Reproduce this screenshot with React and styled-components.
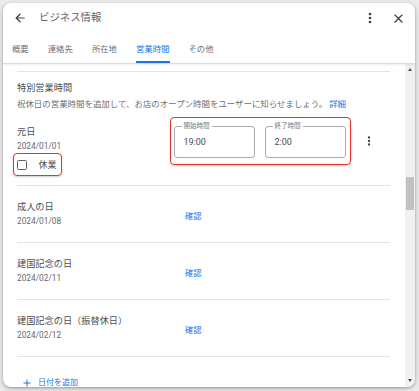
import React from "react";
import styled, { createGlobalStyle } from "styled-components";

const Global = createGlobalStyle`
  html, body { margin: 0; padding: 0; background: #ececec; }
  body {
    font-family: Roboto, "Noto Sans CJK JP", sans-serif;
    width: 419px; height: 391px; overflow: hidden;
    -webkit-font-smoothing: antialiased;
  }
`;

const Page = styled.div`
  box-sizing: border-box;
  height: 391px;
  padding: 3px 4px 4px 3px;
`;

const Dialog = styled.div`
  width: 412px;
  height: 384px;
  background: #fff;
  border-radius: 8px;
  box-shadow: 0 1px 3px rgba(0,0,0,0.3), 0 2px 8px rgba(0,0,0,0.12);
  display: flex;
  flex-direction: column;
  overflow: hidden;
`;

const Header = styled.div`
  flex-shrink: 0;
  height: 30px;
  display: flex;
  align-items: center;
  padding: 0 9.5px;
`;

const Title = styled.div`
  flex: 1;
  margin-left: 12.5px;
  font-size: 10.4px;
  line-height: 14px;
  color: #5f6368;
`;

const IconBox = styled.svg`
  display: block;
  flex-shrink: 0;
  width: ${(p) => p.$size}px;
  height: ${(p) => p.$size}px;
  margin-left: ${(p) => p.$ml || 0}px;
  margin-top: ${(p) => p.$mt || 0}px;
  fill: ${(p) => p.$color || "#3c4043"};
`;

const Tabs = styled.div`
  flex-shrink: 0;
  height: 30px;
  display: flex;
  gap: 19px;
  padding-left: 9px;
  border-bottom: 1px solid #dcdcdc;
  box-shadow: 0 1px 2px rgba(0,0,0,0.08);
  position: relative;
  z-index: 1;
`;

const Tab = styled.div`
  box-sizing: border-box;
  height: 30px;
  padding-top: 10px;
  font-size: 8.4px;
  line-height: 12px;
  color: ${(p) => (p.$active ? "#1a73e8" : "#6b6f74")};
  border-bottom: 2px solid ${(p) => (p.$active ? "#1a73e8" : "transparent")};
`;

const Body = styled.div`
  flex: 1;
  min-height: 0;
  display: flex;
`;

const Content = styled.div`
  flex: 1;
  min-width: 0;
  overflow: hidden;
  padding: 7px 15px 0 14px;
`;

const Divider = styled.div`
  height: 1px;
  background: #e3e3e3;
`;

const SectionTitle = styled.div`
  margin-top: 9px;
  font-size: 9.2px;
  line-height: 14px;
  color: #4a4e52;
`;

const Description = styled.div`
  margin-top: 2px;
  font-size: 8.45px;
  line-height: 14px;
  color: #6b6f74;
  white-space: nowrap;
  display: flex;
`;

const Link = styled.a`
  margin-left: 2px;
  color: #1a73e8;
  text-decoration: none;
`;

const EditRow = styled.div`
  box-sizing: border-box;
  height: 74px;
  display: flex;
  align-items: flex-start;
`;

const LeftCol = styled.div`
  flex-shrink: 0;
  width: ${(p) => p.$w}px;
  margin-top: ${(p) => p.$mt || 0}px;
`;

const Name = styled.div`
  font-size: 9.2px;
  line-height: 14px;
  color: #4a4e52;
  white-space: nowrap;
`;

const DateText = styled.div`
  margin-top: 1px;
  font-size: 8.3px;
  line-height: 12px;
  color: #65696e;
`;

const Highlight = styled.div`
  box-sizing: border-box;
  border: 1.5px solid #e8302c;
  border-radius: 4px;
  box-shadow: 0 1px 2px rgba(0,0,0,0.2);
`;

const CheckHighlight = styled(Highlight)`
  margin-top: 1px;
  margin-left: -4px;
  width: 49px;
  height: 23px;
  display: flex;
  align-items: center;
  padding-left: 2.5px;
`;

const CheckBox = styled.div`
  box-sizing: border-box;
  width: 10px;
  height: 10px;
  border: 1.5px solid #5f6368;
  border-radius: 1.5px;
`;

const CheckLabel = styled.span`
  margin-left: 12px;
  font-size: 9px;
  line-height: 12px;
  color: #4a4e52;
`;

const FieldsHighlight = styled(Highlight)`
  margin-top: 6px;
  width: 181px;
  height: 48px;
  display: flex;
  gap: 10px;
  padding: 7.5px 3.5px 0 2.5px;
`;

const Field = styled.div`
  position: relative;
  box-sizing: border-box;
  width: 81px;
  height: 32px;
  border: 1px solid #a9acb0;
  border-radius: 3px;
  padding-left: 9px;
  font-size: 9px;
  line-height: 30px;
  color: #4a4e52;
`;

const FieldLabel = styled.span`
  position: absolute;
  top: -5px;
  left: 7px;
  padding: 0 2px;
  background: #fff;
  font-size: 6.5px;
  line-height: 8px;
  color: #75797e;
`;

const HolidayRow = styled.div`
  box-sizing: border-box;
  height: 57px;
  border-top: 1px solid #e3e3e3;
  padding-top: 14px;
  display: flex;
  align-items: flex-start;
`;

const Confirm = styled.div`
  margin-top: 10px;
  font-size: 8.2px;
  line-height: 12px;
  color: #1a73e8;
`;

const AddRow = styled.div`
  border-top: 1px solid #e3e3e3;
  padding-top: 20px;
  padding-left: 3.5px;
  display: flex;
  align-items: center;
  gap: 5.5px;
  color: #1a73e8;
  font-size: 8px;
  line-height: 12px;
`;

const Scrollbar = styled.div`
  flex-shrink: 0;
  width: 10px;
  background: #f1f1f1;
  display: flex;
  flex-direction: column;
  align-items: center;
`;

const Arrow = styled.div`
  width: 0;
  height: 0;
  margin: ${(p) => (p.$down ? "0 0 5px" : "4px 0 0")};
  border-left: 2.5px solid transparent;
  border-right: 2.5px solid transparent;
  ${(p) => (p.$down ? "border-top: 3px solid #505050;" : "border-bottom: 3px solid #505050;")}
`;

const Track = styled.div`
  flex: 1;
  align-self: stretch;
  display: flex;
  justify-content: center;
`;

const Thumb = styled.div`
  margin-top: 106px;
  width: 8px;
  height: 33px;
  background: #c1c1c1;
`;

const ArrowBack = () => (
  <IconBox $size={14} viewBox="0 0 24 24" $color="#3c4043">
    <path d="M20 11H7.83l5.59-5.59L12 4l-8 8 8 8 1.41-1.41L7.83 13H20v-2z" />
  </IconBox>
);

const MoreVert = ({ size, ml, mt }) => (
  <IconBox $size={size} $ml={ml} $mt={mt} viewBox="0 0 24 24" $color="#3c4043">
    <circle cx="12" cy="6" r="2" />
    <circle cx="12" cy="12" r="2" />
    <circle cx="12" cy="18" r="2" />
  </IconBox>
);

const CloseIcon = () => (
  <IconBox $size={15} $ml={12.5} viewBox="0 0 24 24" $color="#3c4043">
    <path d="M19 6.41L17.59 5 12 10.59 6.41 5 5 6.41 10.59 12 5 17.59 6.41 19 12 13.41 17.59 19 19 17.59 13.41 12z" />
  </IconBox>
);

const AddIcon = () => (
  <IconBox $size={12} viewBox="0 0 24 24" $color="#1a73e8">
    <path d="M19 13h-6v6h-2v-6H5v-2h6V5h2v6h6v2z" />
  </IconBox>
);

const tabs = ["概要", "連絡先", "所在地", "営業時間", "その他"];

const holidays = [
  { name: "成人の日", date: "2024/01/08" },
  { name: "建国記念の日", date: "2024/02/11" },
  { name: "建国記念の日（振替休日）", date: "2024/02/12" },
];

export default function App() {
  return (
    <>
      <Global />
      <Page>
        <Dialog>
          <Header>
            <ArrowBack />
            <Title>ビジネス情報</Title>
            <MoreVert size={16} />
            <CloseIcon />
          </Header>
          <Tabs>
            {tabs.map((t) => (
              <Tab key={t} $active={t === "営業時間"}>
                {t}
              </Tab>
            ))}
          </Tabs>
          <Body>
            <Content>
              <Divider />
              <SectionTitle>特別営業時間</SectionTitle>
              <Description>
                <span>祝休日の営業時間を追加して、お店のオープン時間をユーザーに知らせましょう。</span>
                <Link>詳細</Link>
              </Description>
              <EditRow>
                <LeftCol $w={153} $mt={14}>
                  <Name>元日</Name>
                  <DateText>2024/01/01</DateText>
                  <CheckHighlight>
                    <CheckBox />
                    <CheckLabel>休業</CheckLabel>
                  </CheckHighlight>
                </LeftCol>
                <FieldsHighlight>
                  <Field>
                    <FieldLabel>開始時間</FieldLabel>
                    19:00
                  </Field>
                  <Field>
                    <FieldLabel>終了時間</FieldLabel>
                    2:00
                  </Field>
                </FieldsHighlight>
                <MoreVert size={14} ml={11} mt={23} />
              </EditRow>
              {holidays.map((h) => (
                <HolidayRow key={h.date}>
                  <LeftCol $w={168}>
                    <Name>{h.name}</Name>
                    <DateText>{h.date}</DateText>
                  </LeftCol>
                  <Confirm>確認</Confirm>
                </HolidayRow>
              ))}
              <AddRow>
                <AddIcon />
                <span>日付を追加</span>
              </AddRow>
            </Content>
            <Scrollbar>
              <Arrow />
              <Track>
                <Thumb />
              </Track>
              <Arrow $down />
            </Scrollbar>
          </Body>
        </Dialog>
      </Page>
    </>
  );
}
